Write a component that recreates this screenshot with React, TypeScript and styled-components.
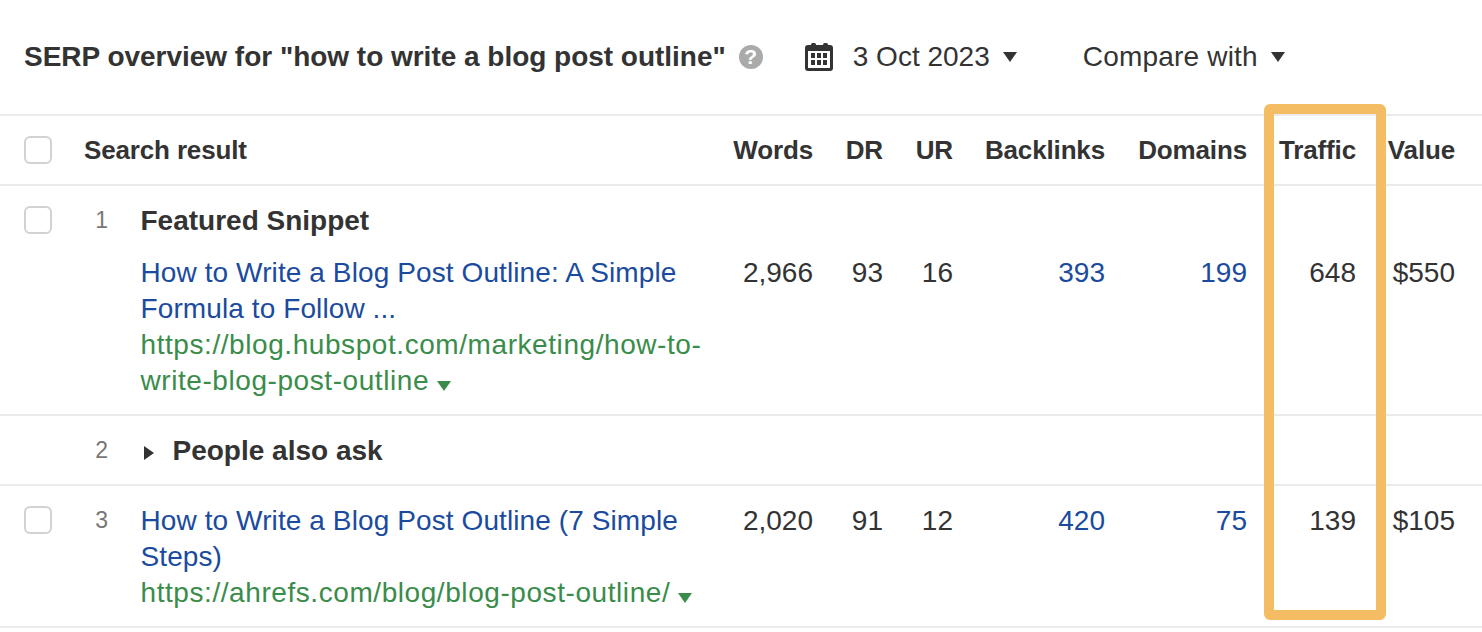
import React from "react";
import styled, { createGlobalStyle } from "styled-components";

const GlobalStyle = createGlobalStyle`
  html, body {
    margin: 0;
    padding: 0;
    background: #fff;
  }
  body {
    font-family: "Liberation Sans", Arial, sans-serif;
    color: #333;
    overflow: hidden;
  }
`;

const Page = styled.div`
  position: relative;
  width: 1482px;
  height: 632px;
  overflow: hidden;
`;

const Toolbar = styled.div`
  display: flex;
  align-items: center;
  height: 114px;
  padding-left: 24px;
  font-size: 28px;
`;

const Heading = styled.h1`
  margin: 0;
  font-size: 28px;
  font-weight: 700;
  letter-spacing: -0.02px;
  color: #333;
`;

const HelpIcon = styled.span`
  display: flex;
  align-items: center;
  justify-content: center;
  width: 24px;
  height: 24px;
  margin-left: 13px;
  border-radius: 50%;
  background: #aaa;
  color: #fff;
  font-size: 21px;
  font-weight: 700;
`;

const Picker = styled.div<{ $offset: number }>`
  display: flex;
  align-items: center;
  margin-left: ${(p) => p.$offset}px;
`;

const PickerLabel = styled.span<{ $gap?: number; $spacing?: number }>`
  margin-left: ${(p) => p.$gap ?? 0}px;
  margin-right: 13px;
  letter-spacing: ${(p) => p.$spacing ?? 0}px;
`;

const Caret = styled.span<{ $color?: string }>`
  display: inline-block;
  width: 0;
  height: 0;
  border-left: 7px solid transparent;
  border-right: 7px solid transparent;
  border-top: 10px solid ${(p) => p.$color ?? "#333"};
`;

const SideCaret = styled.span`
  width: 0;
  height: 0;
  margin: 4px 19px 0 3px;
  border-top: 7.5px solid transparent;
  border-bottom: 7.5px solid transparent;
  border-left: 10px solid #333;
`;

const Row = styled.div<{ $center?: boolean }>`
  display: grid;
  grid-template-columns: 84px 24px 597px 108px 70px 70px 152px 142px 109px 99px 27px;
  align-items: ${(p) => (p.$center ? "center" : "start")};
  padding: 17px 0 15px;
  border-top: 2px solid #ebebeb;
  font-size: 28px;
  line-height: 36px;
`;

const HeaderRow = styled(Row)`
  padding: 16px 0;
  font-size: 26px;
  font-weight: 700;
  letter-spacing: -0.15px;
`;

const CheckCell = styled.div`
  padding-left: 24px;
  height: 34px;
  display: flex;
  align-items: center;
`;

const Checkbox = styled.span`
  box-sizing: border-box;
  width: 28px;
  height: 28px;
  border: 2px solid #d2d2d2;
  border-radius: 6px;
  background: #fff;
`;

const RowNumber = styled.div`
  text-align: right;
  font-size: 23px;
  line-height: 34px;
  color: #777;
`;

const HeaderLabel = styled.div`
  grid-column: 2 / span 2;
`;

const ResultCell = styled.div`
  padding-left: 32.5px;
`;

const SnippetLabel = styled.div`
  margin-bottom: 16px;
  font-weight: 700;
`;

const GroupLabel = styled.div`
  display: flex;
  align-items: center;
  font-weight: 700;
`;

const ResultTitle = styled.a`
  display: block;
  color: #1b4b9e;
  text-decoration: none;
  letter-spacing: 0.1px;
`;

const ResultUrl = styled.div`
  color: #3a8c4a;
  letter-spacing: 0.57px;
`;

const Metric = styled.div<{ $link?: boolean }>`
  text-align: right;
  color: ${(p) => (p.$link ? "#1b4b9e" : "#333")};
`;

const UrlCaret = styled(Caret)`
  margin-left: 8px;
  vertical-align: -1px;
`;

const Highlight = styled.div`
  position: absolute;
  left: 1264px;
  top: 104px;
  box-sizing: border-box;
  width: 122px;
  height: 516px;
  border: 10px solid #f4bd63;
  border-radius: 6px;
  pointer-events: none;
`;

const BottomRule = styled.div`
  border-top: 2px solid #ebebeb;
`;

const OffsetBox = styled.div`
  display: contents;
  & > div {
    margin-top: 52px;
  }
`;

const CalendarIcon = () => (
  <svg width="28" height="28" viewBox="0 0 28 28" fill="#333">
    <rect x="6" y="0" width="5" height="5" rx="1.5" />
    <rect x="18" y="0" width="5" height="5" rx="1.5" />
    <path
      fillRule="evenodd"
      d="M3 2h22a3 3 0 0 1 3 3v20a3 3 0 0 1-3 3H3a3 3 0 0 1-3-3V5a3 3 0 0 1 3-3zM3 8v17h22V8H3z"
    />
    <path d="M6 10h4v5H6zM12 10h4v5h-4zM18 10h4v5h-4zM6 17h4v5H6zM12 17h4v5h-4zM18 17h4v5h-4z" />
  </svg>
);

type Result = {
  rank: number;
  title: string;
  url: string;
  snippet?: boolean;
  words: string;
  dr: number;
  ur: number;
  backlinks: number;
  domains: number;
  traffic: number;
  value: string;
};

const Metrics = ({ r }: { r: Result }) => (
  <>
    <Metric>{r.words}</Metric>
    <Metric>{r.dr}</Metric>
    <Metric>{r.ur}</Metric>
    <Metric $link>{r.backlinks}</Metric>
    <Metric $link>{r.domains}</Metric>
    <Metric>{r.traffic}</Metric>
    <Metric>{r.value}</Metric>
  </>
);

const ResultRow = ({ r }: { r: Result }) => (
  <Row>
    <CheckCell>
      <Checkbox />
    </CheckCell>
    <RowNumber>{r.rank}</RowNumber>
    <ResultCell>
      {r.snippet && <SnippetLabel>Featured Snippet</SnippetLabel>}
      <ResultTitle>{r.title}</ResultTitle>
      <ResultUrl>
        {r.url}
        <UrlCaret $color="#3a8c4a" />
      </ResultUrl>
    </ResultCell>
    {r.snippet ? (
      <OffsetBox>
        <Metrics r={r} />
      </OffsetBox>
    ) : (
      <Metrics r={r} />
    )}
  </Row>
);

const first: Result = {
  rank: 1,
  snippet: true,
  title: "How to Write a Blog Post Outline: A Simple Formula to Follow ...",
  url: "https://blog.hubspot.com/marketing/how-to-write-blog-post-outline",
  words: "2,966",
  dr: 93,
  ur: 16,
  backlinks: 393,
  domains: 199,
  traffic: 648,
  value: "$550",
};

const third: Result = {
  rank: 3,
  title: "How to Write a Blog Post Outline (7 Simple Steps)",
  url: "https://ahrefs.com/blog/blog-post-outline/",
  words: "2,020",
  dr: 91,
  ur: 12,
  backlinks: 420,
  domains: 75,
  traffic: 139,
  value: "$105",
};

export default function App() {
  return (
    <Page>
      <GlobalStyle />
      <Toolbar>
        <Heading>SERP overview for "how to write a blog post outline"</Heading>
        <HelpIcon>?</HelpIcon>
        <Picker $offset={42}>
          <CalendarIcon />
          <PickerLabel $gap={20}>3 Oct 2023</PickerLabel>
          <Caret />
        </Picker>
        <Picker $offset={66}>
          <PickerLabel $spacing={0.2}>Compare with</PickerLabel>
          <Caret />
        </Picker>
      </Toolbar>
      <HeaderRow $center>
        <CheckCell>
          <Checkbox />
        </CheckCell>
        <HeaderLabel>Search result</HeaderLabel>
        <Metric>Words</Metric>
        <Metric>DR</Metric>
        <Metric>UR</Metric>
        <Metric>Backlinks</Metric>
        <Metric>Domains</Metric>
        <Metric>Traffic</Metric>
        <Metric>Value</Metric>
      </HeaderRow>
      <ResultRow r={first} />
      <Row>
        <div />
        <RowNumber>2</RowNumber>
        <ResultCell>
          <GroupLabel>
            <SideCaret />
            People also ask
          </GroupLabel>
        </ResultCell>
      </Row>
      <ResultRow r={third} />
      <BottomRule />
      <Highlight />
    </Page>
  );
}
